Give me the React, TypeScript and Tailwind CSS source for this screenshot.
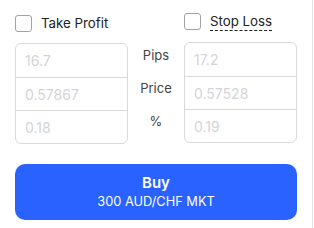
const rows = [
  { label: "Pips", tp: "16.7", sl: "17.2" },
  { label: "Price", tp: "0.57867", sl: "0.57528" },
  { label: "%", tp: "0.18", sl: "0.19" },
];

const Box = () => (
  <span className="w-[17px] h-[17px] rounded-[3px] border border-[#a3a3a3] bg-white shrink-0" />
);

const Column = ({ values, className = "" }: { values: string[]; className?: string }) => (
  <div className={`flex flex-col border border-[#d9d9d9] rounded-[6px] overflow-hidden ${className}`}>
    {values.map((v, i) => (
      <div
        key={i}
        className={`h-[33px] flex items-center px-[9px] text-[14px] text-[#d4d4d8] ${i > 0 ? "border-t border-[#d9d9d9]" : ""}`}
      >
        {v}
      </div>
    ))}
  </div>
);

export default function App() {
  return (
    <div
      className="w-[313px] h-[228px] bg-white border-r border-[#e5e5e5] px-[15px] pt-[15px]"
      style={{ fontFamily: "Inter, 'Noto Sans', sans-serif" }}
    >
      <div className="grid grid-cols-[113px_56px_113px] items-start">
        <label className="flex items-center gap-[9px] h-[17px]">
          <Box />
          <span className="text-[13.3px] text-[#222] pt-[1px]">Take Profit</span>
        </label>
        <div />
        <label className="flex items-center gap-[9px] h-[17px] -mt-[2px]">
          <Box />
          <span className="text-[13.3px] text-[#222] border-b border-dashed border-[#222] leading-[17px]">Stop Loss</span>
        </label>
      </div>
      <div className="grid grid-cols-[113px_56px_113px] items-start mt-[11px]">
        <Column values={rows.map((r) => r.tp)} />
        <div className="flex flex-col">
          {rows.map((r) => (
            <div key={r.label} className="h-[33px] flex justify-center pt-[4px] text-[13px] leading-[16px] text-[#444]">
              {r.label}
            </div>
          ))}
        </div>
        <Column values={rows.map((r) => r.sl)} className="-mt-[1px]" />
      </div>
      <button className="mt-[20px] w-[282px] h-[56px] rounded-[10px] bg-[#2962ff] text-white flex flex-col items-center justify-center">
        <span className="text-[15px] font-semibold leading-[20px]">Buy</span>
        <span className="text-[12.8px] leading-[18px]">300 AUD/CHF MKT</span>
      </button>
    </div>
  );
}
